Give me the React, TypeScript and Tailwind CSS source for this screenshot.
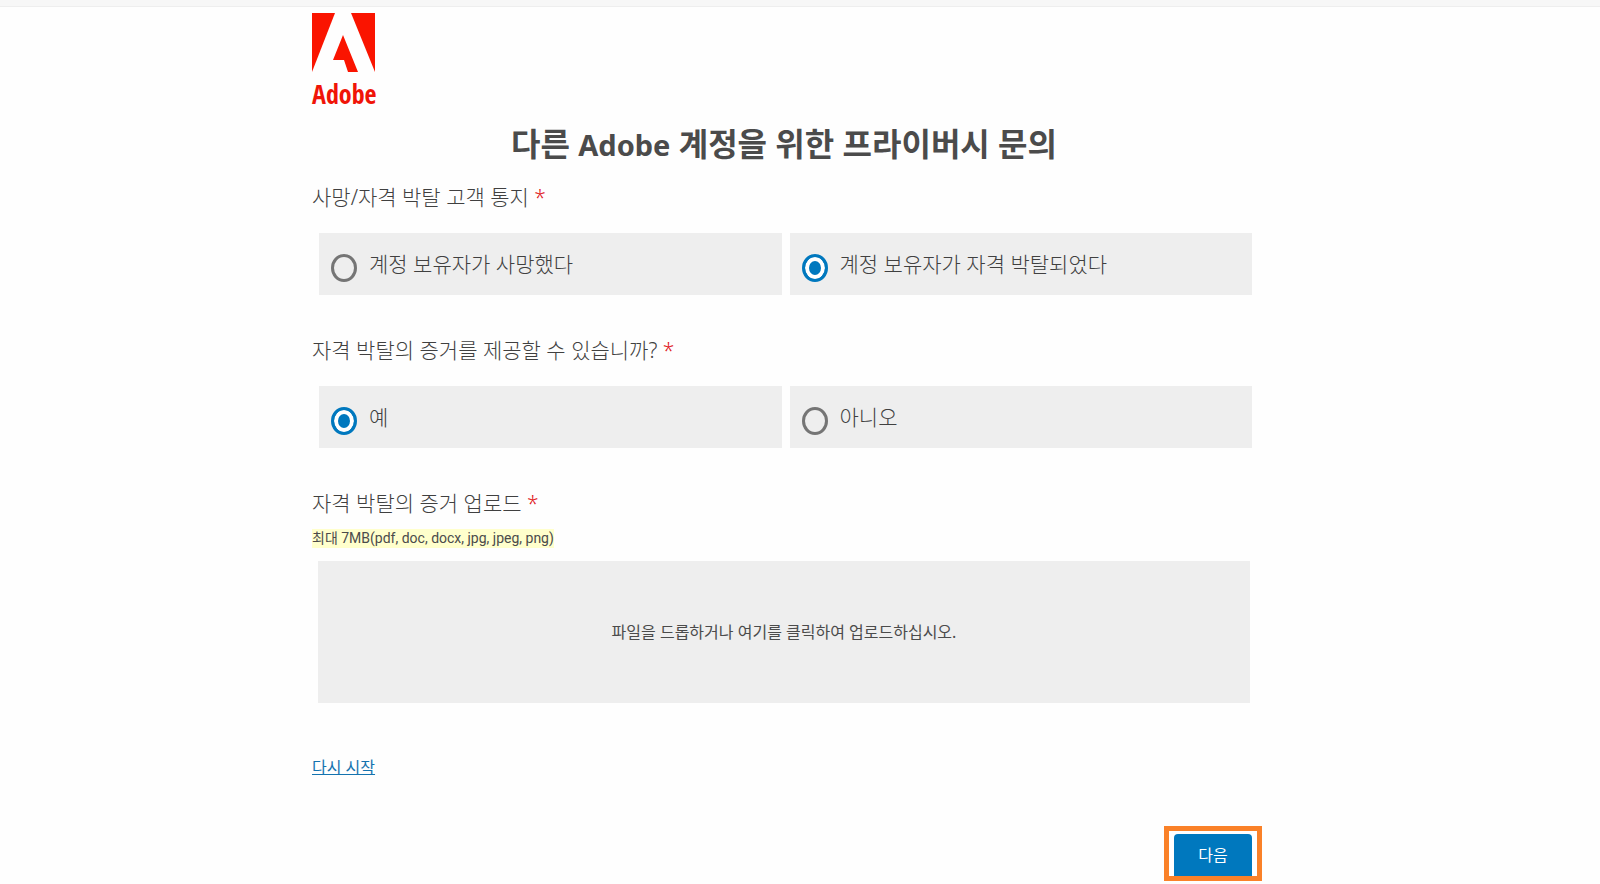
type Option = { value: string; label: string };

type RadioQuestionProps = {
  name: string;
  title: string;
  options: Option[];
  selected: string;
};

function Required() {
  return <span className="text-[#e0161b]">*</span>;
}

function RadioQuestion({ name, title, options, selected }: RadioQuestionProps) {
  return (
    <fieldset className="mb-[43px]">
      <legend className="mb-6 text-[21px] font-light leading-6">
        {title} <Required />
      </legend>
      <div className="ml-[7px] mr-1 grid grid-cols-2 gap-2">
        {options.map((option) => (
          <label
            key={option.value}
            className="flex h-[62px] cursor-pointer items-center gap-3 bg-[#eeeeee] px-3 text-[21px] font-light leading-6"
          >
            <input
              type="radio"
              name={name}
              value={option.value}
              defaultChecked={option.value === selected}
              className="mt-2 h-7 w-[26px] shrink-0 appearance-none rounded-[50%] border-[3px] border-[#757575] checked:border-[#0078be] checked:bg-[#0078be] checked:shadow-[inset_0_0_0_4px_white]"
            />
            <span>{option.label}</span>
          </label>
        ))}
      </div>
    </fieldset>
  );
}

function AdobeLogo() {
  return (
    <a href="#" className="flex w-[63px] flex-col text-[#f01408]">
      <svg viewBox="0 0 63 59" className="h-[59px] w-[63px]" fill="#fa1400" aria-hidden="true">
        <path d="M0 0H23L0 59Z" />
        <path d="M39 0H63V59Z" />
        <path d="M31 22L46 59H36L32 47H21Z" />
      </svg>
      <span className="mt-2 font-['Open_Sans_Condensed','Roboto_Condensed','Noto_Sans_Condensed',Lato,sans-serif] text-[26px] font-bold leading-7">
        Adobe
      </span>
    </a>
  );
}

export default function App() {
  return (
    <div className="min-h-screen bg-[#fefefe] font-['Noto_Sans','Noto_Sans_CJK_KR',sans-serif] text-[#404040]">
      <div className="h-[7px] border-b border-[#eeeeee] bg-[#f7f7f7]" />
      <div className="pr-8">
        <main className="mx-auto max-w-[944px] pt-[6px]">
          <AdobeLogo />
          <h1 className="mb-6 mt-5 text-center text-[32px] font-bold leading-8 text-[#4b4b4b]">
            다른 <span className="text-[29px]">Adobe</span> 계정을 위한 프라이버시 문의
          </h1>
          <form onSubmit={(event) => event.preventDefault()}>
            <RadioQuestion
              name="notice"
              title="사망/자격 박탈 고객 통지"
              selected="incapacitated"
              options={[
                { value: "deceased", label: "계정 보유자가 사망했다" },
                { value: "incapacitated", label: "계정 보유자가 자격 박탈되었다" },
              ]}
            />
            <RadioQuestion
              name="evidence"
              title="자격 박탈의 증거를 제공할 수 있습니까?"
              selected="yes"
              options={[
                { value: "yes", label: "예" },
                { value: "no", label: "아니오" },
              ]}
            />
            <div className="text-[21px] font-light leading-6">
              <label htmlFor="proof">
                자격 박탈의 증거 업로드 <Required />
              </label>
            </div>
            <p className="mt-[14px] flex font-[Roboto,'Noto_Sans_CJK_KR',sans-serif] text-[14px] leading-[19px] text-[#4b4b4b]">
              <span className="bg-[#ffffcc]">최대 7MB(pdf, doc, docx, jpg, jpeg, png)</span>
            </p>
            <label className="relative ml-[6px] mr-[6px] mt-[13px] flex h-[142px] cursor-pointer items-center justify-center bg-[#eeeeee] text-base text-[#4b4b4b]">
              파일을 드롭하거나 여기를 클릭하여 업로드하십시오.
              <input
                id="proof"
                type="file"
                accept=".pdf,.doc,.docx,.jpg,.jpeg,.png"
                className="absolute inset-0 cursor-pointer opacity-0"
              />
            </label>
            <a href="#" className="mt-[52px] inline-block text-base leading-6 text-[#1473af] underline">
              다시 시작
            </a>
            <div className="-mr-[6px] mt-[47px] flex justify-end">
              <div className="border-[5px] border-[#fa8128] bg-white px-[5px] pt-[3px]">
                <button
                  type="submit"
                  className="block h-[42px] w-[78px] rounded-t bg-[#0078be] text-base text-white"
                >
                  다음
                </button>
              </div>
            </div>
          </form>
        </main>
      </div>
    </div>
  );
}
